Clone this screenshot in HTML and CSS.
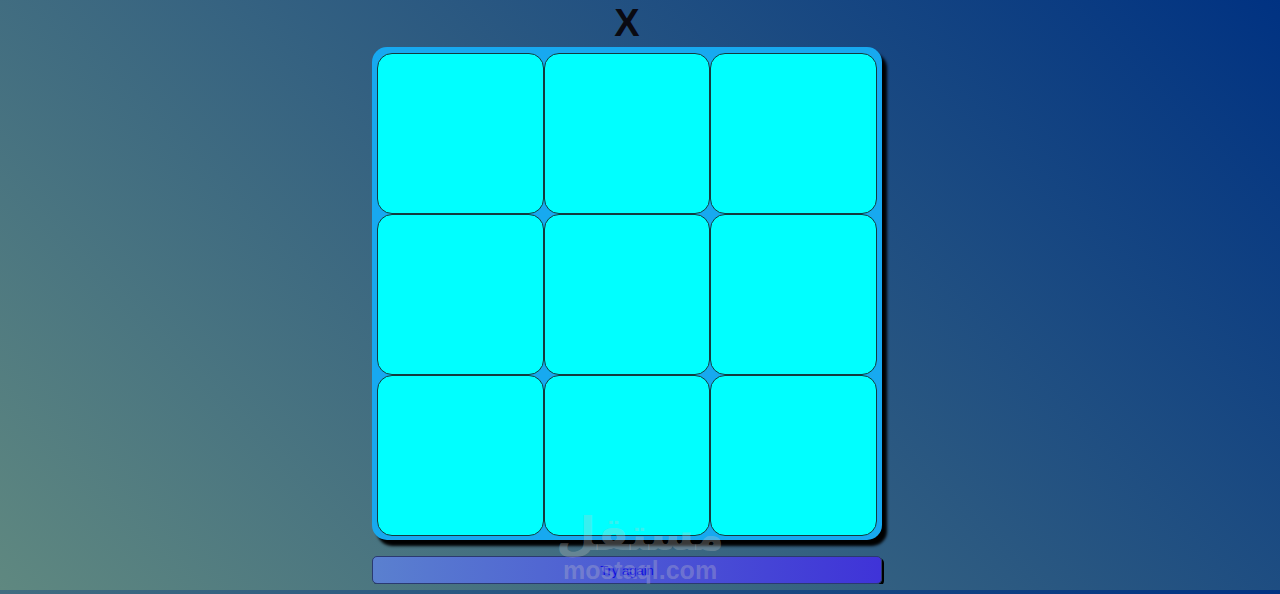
FILE: index.html
```html
<!DOCTYPE html>
<html lang="en">
<head>
<meta charset="utf-8">
<title>Tic Tac Toe</title>
<link rel="stylesheet" href="styles.css">
</head>
<body>
<main class="game">
  <h1 class="turn">X</h1>
  <div class="board">
    <div class="cell"></div>
    <div class="cell"></div>
    <div class="cell"></div>
    <div class="cell"></div>
    <div class="cell"></div>
    <div class="cell"></div>
    <div class="cell"></div>
    <div class="cell"></div>
    <div class="cell"></div>
  </div>
  <button class="restart">Try again</button>
</main>
<div class="watermark">
  <span class="wm-ar">مستقل</span>
  <span class="wm-en">mostaql.com</span>
</div>
</body>
</html>
```

FILE: styles.css
```css
html {
  background: linear-gradient(45deg, #5f8880, #003282) 0 0 / 100% 590px repeat;
  min-height: 100%;
}

body {
  margin: 0;
  font-family: "Liberation Sans", Arial, sans-serif;
}

.game {
  width: 1254px;
  display: flex;
  flex-direction: column;
  align-items: center;
}

.turn {
  margin: 0;
  font-size: 38px;
  line-height: 47px;
  font-weight: bold;
  color: #0a0a12;
}

.board {
  width: 500px;
  padding: 6px 5px 4px;
  display: grid;
  grid-template-columns: repeat(3, 1fr);
  grid-template-rows: repeat(3, 161px);
  background: #17a9f0;
  border-radius: 15px;
  box-shadow: 5px 6px 3px #000;
}

.cell {
  background: #00ffff;
  border: 1px solid #143a3e;
  border-radius: 15px;
}

.restart {
  margin-top: 16px;
  width: 510px;
  height: 28px;
  padding: 0;
  border: 1px solid #2a3a70;
  border-radius: 5px;
  background: linear-gradient(90deg, #5a80cf, #3f33d8);
  box-shadow: 2px 2px 0 #000;
  color: #1010e0;
  font-family: "Liberation Sans", Arial, sans-serif;
  font-size: 13px;
}

.watermark {
  position: absolute;
  left: 563px;
  top: 508px;
  width: 154px;
  display: flex;
  flex-direction: column;
  align-items: center;
  color: rgba(200, 200, 200, 0.3);
  pointer-events: none;
}

.wm-ar {
  font-family: "DejaVu Sans", sans-serif;
  font-weight: bold;
  font-size: 46px;
  line-height: 52px;
}

.wm-en {
  font-family: "Liberation Sans", Arial, sans-serif;
  font-weight: bold;
  font-size: 25px;
  line-height: 26px;
  margin-top: -3px;
}
```
